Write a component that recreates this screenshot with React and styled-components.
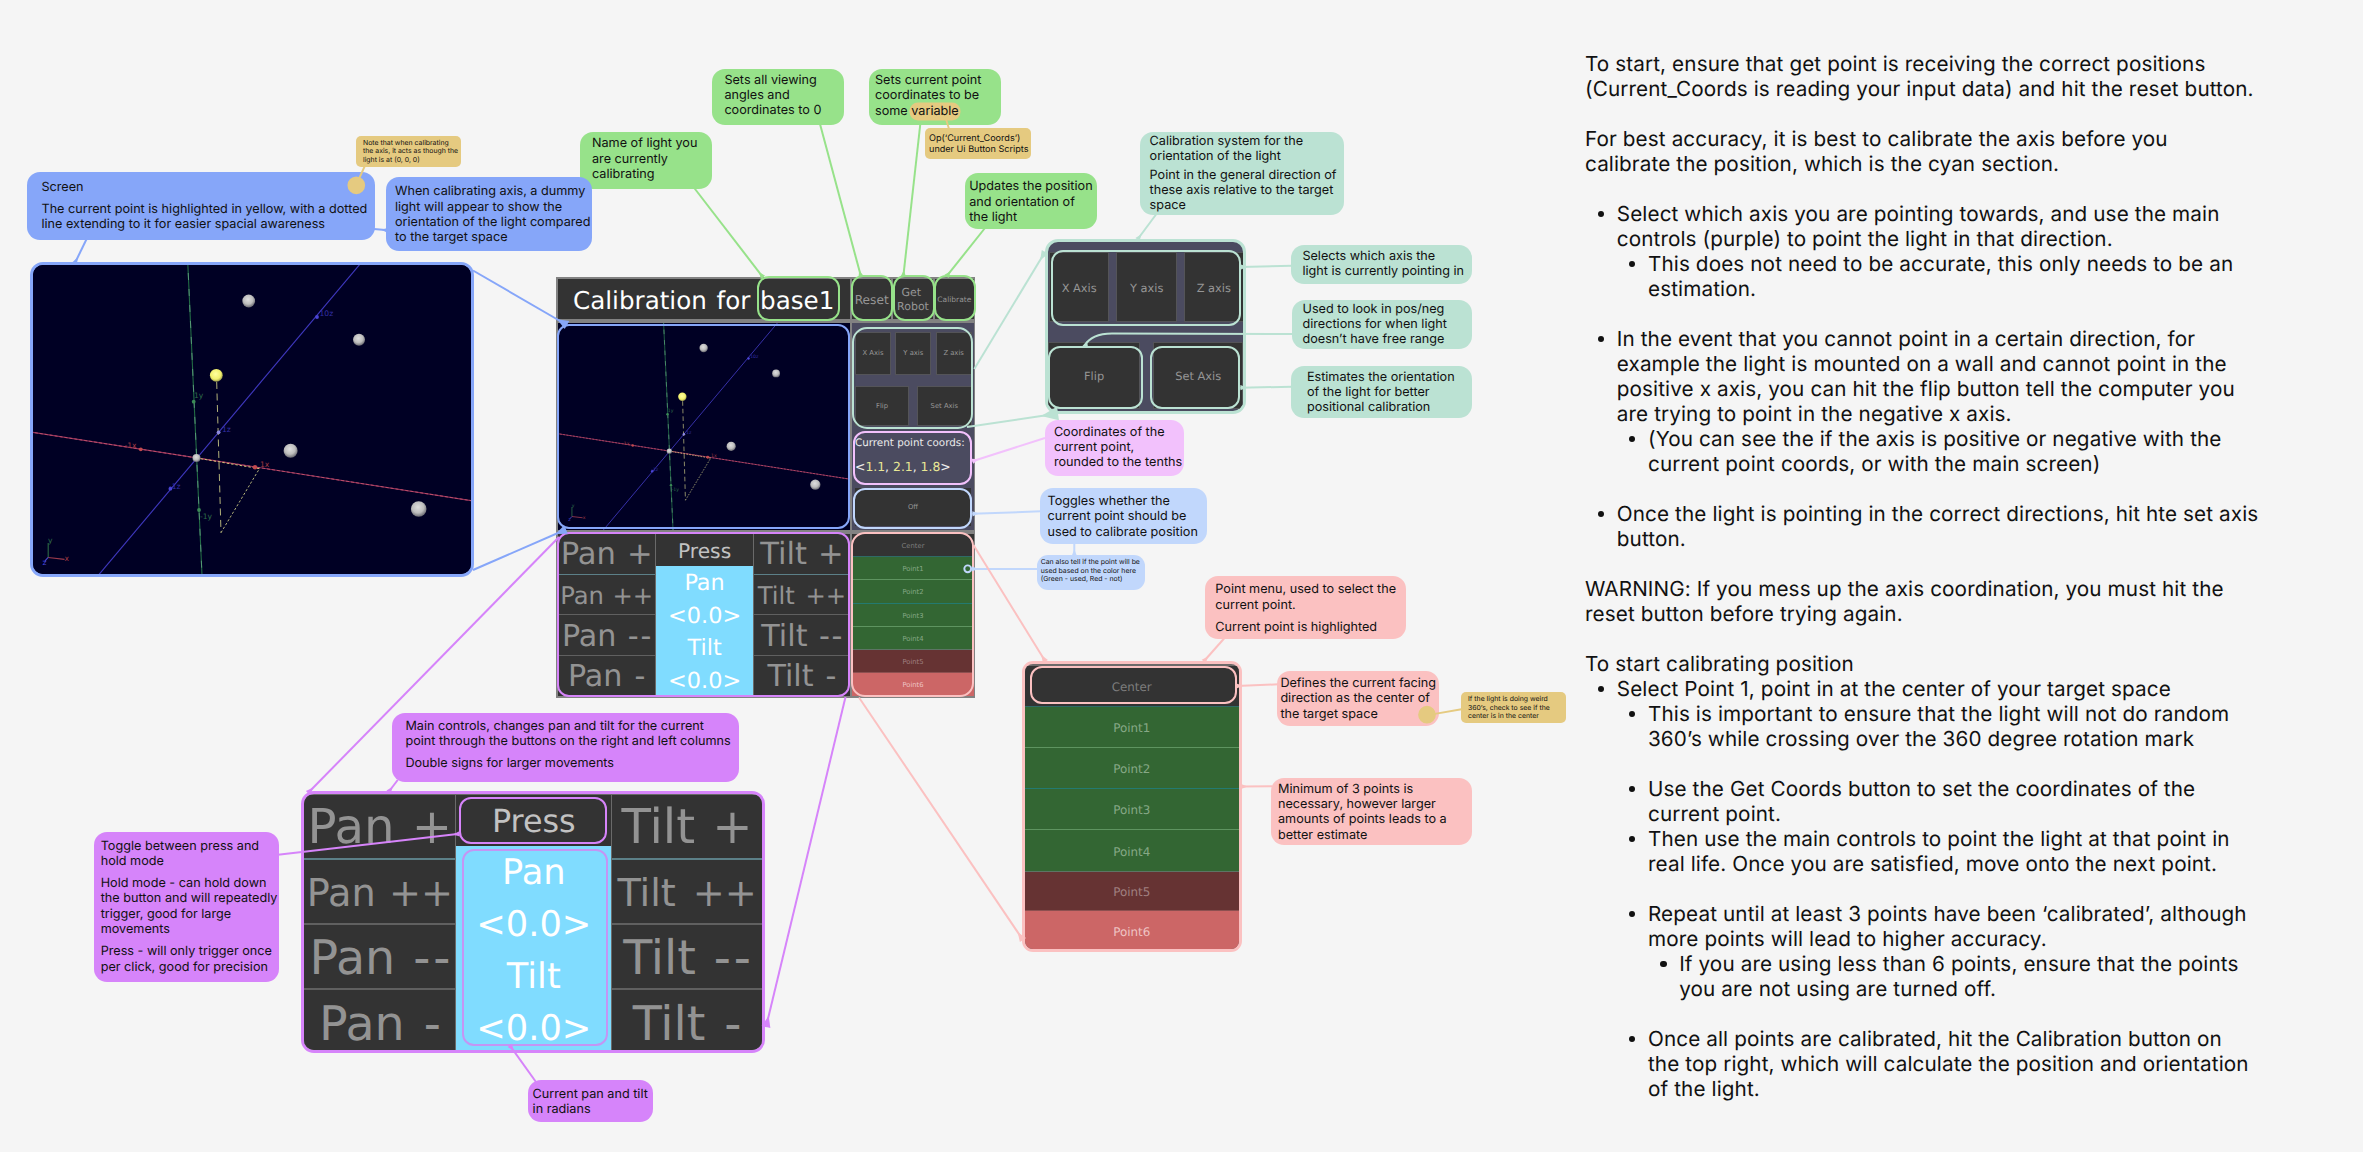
import React from "react";
import styled, { createGlobalStyle } from "styled-components";

const color = {
  page: "#f5f5f5",
  ink: "#111111",
  green: "#97e28a",
  blue: "#86a6f9",
  purple: "#d684fa",
  mint: "#bbe2d3",
  pink: "#fbc1c1",
  lilac: "#f2c1fc",
  sky: "#c1d7fc",
  sand: "#e5ca80",
  key: "#333333",
  slate: "#4b4b60",
  navy: "#000024",
  cyan: "#80dcff",
};

const GlobalStyle = createGlobalStyle`
  body { margin: 0; background: ${color.page}; }
  * { box-sizing: border-box; }
`;

const Page = styled.main`
  display: flex;
  width: 2363px;
  height: 1152px;
  overflow: hidden;
  background: ${color.page};
  color: ${color.ink};
  font-family: Inter, "Liberation Sans", sans-serif;
  text-rendering: geometricPrecision;
`;

/* The board is a free canvas: panels, notes and connectors are pinned on it. */
const Board = styled.section`
  position: relative;
  flex: 0 0 1585px;
`;

const Pinned = styled.div`
  position: absolute;
  left: ${(p) => p.$x}px;
  top: ${(p) => p.$y}px;
  width: ${(p) => p.$w}px;
  height: ${(p) => p.$h}px;
`;

const Frame = styled(Pinned)`
  display: flex;
  flex-direction: column;
  overflow: hidden;
  border: 3px solid ${(p) => p.$tone};
  border-radius: ${(p) => p.$radius || 13}px;
  background: ${(p) => p.$fill || color.key};
`;

const Ring = styled(Pinned)`
  border: 2px solid ${(p) => p.$tone};
  border-radius: ${(p) => p.$radius || 12}px;
`;

const NoteBox = styled(Pinned)`
  display: flex;
  flex-direction: column;
  gap: ${(p) => p.$gap || 0}px;
  padding: ${(p) => p.$padY}px 0 0 ${(p) => p.$padX}px;
  border-radius: ${(p) => p.$radius || 13}px;
  background: ${(p) => p.$tone};
  font-size: ${(p) => p.$size || 12.65}px;
  line-height: ${(p) => p.$lead || 15.33}px;
`;

const NoteText = styled.p`
  margin: 0;
  white-space: pre;
`;

const MarkedLine = styled.div`
  display: flex;
  gap: 3.6px;
`;

const Mark = styled.span`
  background: ${color.sand};
  border-radius: 7px;
  box-shadow: 0 0 0 1.5px ${color.sand};
`;

const Wires = styled.svg`
  position: absolute;
  inset: 0;
  width: 1586px;
  height: 1152px;
`;

/* ---------- Console widgets ---------- */

const uiFont = `"DejaVu Sans", Verdana, sans-serif`;

const Console = styled(Pinned)`
  display: grid;
  grid-template-columns: 292px 122px;
  grid-template-rows: 40px 207px 162px;
  column-gap: 2px;
  row-gap: 4px;
  padding: 2px 1px 1px 2px;
  background: #828282;
  font-family: ${uiFont};
`;

const TitleBar = styled.header`
  display: flex;
  align-items: center;
  padding: 2px 0 0 15px;
  background: ${color.key};
  color: #ffffff;
  font-size: 24.6px;
  word-spacing: 1.9px;
  white-space: nowrap;
`;

const TopKeys = styled.div`
  display: grid;
  grid-template-columns: repeat(3, 1fr);
  gap: 2px;
`;

const Key = styled.div`
  display: flex;
  align-items: center;
  justify-content: center;
  padding-top: ${(p) => p.$drop || 0}px;
  background: ${color.key};
  color: #969696;
  border: ${(p) => (p.$edge ? "1px solid #545458" : "0")};
  font-family: ${uiFont};
  font-size: ${(p) => p.$size}px;
  line-height: ${(p) => (p.$lead ? `${p.$lead}px` : "normal")};
  text-align: center;
  white-space: pre;
`;

const Side = styled.div`
  display: flex;
  flex-direction: column;
  padding: 9px 2px 2px 3px;
  background: ${color.slate};
`;

const KeyRow = styled.div`
  display: grid;
  grid-template-columns: ${(p) => p.$cols};
  column-gap: ${(p) => p.$gap}px;
  height: ${(p) => p.$h}px;
  margin: ${(p) => p.$margin || 0};
`;

const Readout = styled.div`
  display: flex;
  flex-direction: column;
  height: 61px;
  padding-top: 9px;
  color: #ececec;
  font-size: 10.35px;
  line-height: 14px;
  white-space: pre;
`;

const Coords = styled.div`
  margin-top: 10px;
  font-size: 12.4px;
`;

const Num = styled.span`
  color: #e9e795;
`;

const PadInset = styled.div`
  flex: 1;
  padding-top: 1px;
`;

const PadGrid = styled.div`
  display: grid;
  grid-template-columns: ${(p) => p.$cols};
  column-gap: 1px;
  height: ${(p) => p.$h}px;
  overflow: hidden;
  background: #6a6a6a;
  font-family: ${uiFont};
`;

const PadColumn = styled.div`
  display: flex;
  flex-direction: column;
`;

const PadKey = styled.div`
  display: flex;
  flex: 0 0 ${(p) => p.$h}px;
  align-items: center;
  justify-content: center;
  padding-top: ${(p) => p.$drop}px;
  border-bottom: ${(p) => p.$rule}px solid ${(p) => (p.$tint ? "#5c8088" : "#606060")};
  background: ${color.key};
  color: #939393;
  font-size: ${(p) => p.$size}px;
  word-spacing: ${(p) => p.$word || 0}em;
  white-space: nowrap;
`;

const Sign = styled.span`
  letter-spacing: ${(p) => p.$track}em;
  margin-right: -${(p) => p.$track}em;
`;

const ModeKey = styled.div`
  display: flex;
  flex: 0 0 ${(p) => p.$h}px;
  align-items: center;
  justify-content: center;
  padding-top: 1.5px;
  background: ${color.key};
  color: #c2c2c2;
  font-size: ${(p) => p.$size}px;
`;

const Angles = styled.div`
  flex: 1;
  padding-top: ${(p) => p.$top}px;
  background: ${color.cyan};
  color: #ffffff;
  text-align: center;
  font-size: ${(p) => p.$size}px;
  line-height: ${(p) => p.$lead}px;
`;

const PointsInset = styled.div`
  display: flex;
  flex: 1;
  padding-top: 2px;
`;

const PointList = styled.div`
  display: flex;
  flex-direction: column;
  flex: 1;
  font-family: ${uiFont};
  font-size: ${(p) => p.$size}px;
`;

const pointFill = {
  center: ["#333333", "#7d7d7d", "#2f6a66"],
  on: ["#336633", "#86a886", "#5e9460"],
  teal: ["#336633", "#86a886", "#237a70"],
  last: ["#336633", "#86a886", "#5d7464"],
  off: ["#663333", "#a08080", "#8d5050"],
  hot: ["#cc6666", "#efc4c4", "#cc6666"],
};

const PointRow = styled.div`
  display: flex;
  flex: 0 0 ${(p) => p.$h}px;
  align-items: center;
  justify-content: center;
  padding-top: ${(p) => p.$drop}px;
  border-bottom: ${(p) => p.$rule}px solid ${(p) => pointFill[p.$kind][2]};
  background: ${(p) => pointFill[p.$kind][0]};
  color: ${(p) => pointFill[p.$kind][1]};
`;

const ScreenSvg = styled.svg`
  display: block;
  width: 100%;
  height: 100%;
  background: ${color.navy};
`;

/* ---------- Instructions column ---------- */

const Guide = styled.article`
  flex: 1;
  padding-top: 51.3px;
  font-size: 20.7px;
  letter-spacing: 0.11px;
  line-height: 25px;
`;

const GuideText = styled.p`
  margin: 0 0 ${(p) => (p.$after ? 25 : 0)}px;
  white-space: pre;
`;

const GuideItem = styled.div`
  display: flex;
  align-items: flex-start;
  padding-left: ${(p) => p.$level * 31.2 - 18.4}px;
  margin-bottom: ${(p) => (p.$after ? 25 : 0)}px;
  white-space: pre;
`;

const Bullet = styled.span`
  flex: 0 0 6.4px;
  height: 6.4px;
  margin: 9.8px 12.6px 0 0;
  border-radius: 50%;
  background: ${color.ink};
`;

/* ---------- Data ---------- */

const notes = [
  { x: 580, y: 132, w: 132, h: 56.5, tone: color.green, padX: 12, padY: 4.4, text: ["Name of light you\nare currently\ncalibrating"] },
  { x: 712.4, y: 68.7, w: 131.6, h: 56.3, tone: color.green, padX: 12, padY: 4, text: ["Sets all viewing\nangles and\ncoordinates to 0"] },
  { x: 869, y: 69, w: 132, h: 56, tone: color.green, padX: 6, padY: 4, text: ["Sets current point\ncoordinates to be"], marked: ["some", "variable"] },
  { x: 964.6, y: 173, w: 132.4, h: 56, tone: color.green, padX: 4.6, padY: 6.4, text: ["Updates the position\nand orientation of\nthe light"] },
  { x: 925, y: 128, w: 106, h: 31, tone: color.sand, padX: 4, padY: 5.4, radius: 5, size: 9.1, lead: 11.1, text: ["Op(‘Current_Coords’)\nunder Ui Button Scripts"] },
  { x: 27.3, y: 171.7, w: 347.7, h: 68.3, tone: color.blue, padX: 14.2, padY: 8, gap: 7, text: ["Screen", "The current point is highlighted in yellow, with a dotted\nline extending to it for easier spacial awareness"] },
  { x: 386.3, y: 177.3, w: 205.7, h: 73.7, tone: color.blue, padX: 8.7, padY: 7, text: ["When calibrating axis, a dummy\nlight will appear to show the\norientation of the light compared\nto the target space"] },
  { x: 356, y: 135.5, w: 105, h: 31, tone: color.sand, padX: 7, padY: 3.4, radius: 5, size: 6.9, lead: 8.35, text: ["Note that when calibrating\nthe axis, it acts as though the\nlight is at (0, 0, 0)"] },
  { x: 1139.6, y: 132.3, w: 204.7, h: 82.7, tone: color.mint, padX: 10, padY: 1.3, gap: 3.4, text: ["Calibration system for the\norientation of the light", "Point in the general direction of\nthese axis relative to the target\nspace"] },
  { x: 1291.4, y: 244.7, w: 180.4, h: 39.3, tone: color.mint, padX: 11, padY: 4, text: ["Selects which axis the\nlight is currently pointing in"] },
  { x: 1292, y: 299.7, w: 180, h: 49.6, tone: color.mint, padX: 10.5, padY: 2, text: ["Used to look in pos/neg\ndirections for when light\ndoesn’t have free range"] },
  { x: 1291.4, y: 365.7, w: 180.4, h: 52.6, tone: color.mint, padX: 15.5, padY: 4, text: ["Estimates the orientation\nof the light for better\npositional calibration"] },
  { x: 1044.5, y: 419.7, w: 139.5, h: 56.3, tone: color.lilac, padX: 9.4, padY: 5, text: ["Coordinates of the\ncurrent point,\nrounded to the tenths"] },
  { x: 1040, y: 488, w: 167.3, h: 56.3, tone: color.sky, padX: 7.5, padY: 6, text: ["Toggles whether the\ncurrent point should be\nused to calibrate position"] },
  { x: 1037, y: 554.7, w: 108, h: 35, tone: color.sky, padX: 3.7, padY: 3.8, radius: 11, size: 6.9, lead: 8.35, text: ["Can also tell if the point will be\nused based on the color here\n(Green - used, Red - not)"] },
  { x: 1205.3, y: 576, w: 200.7, h: 62.7, tone: color.pink, padX: 10, padY: 6.3, gap: 6.8, text: ["Point menu, used to select the\ncurrent point.", "Current point is highlighted"] },
  { x: 1276.7, y: 670.7, w: 162.3, h: 55.6, tone: color.pink, padX: 3.7, padY: 5.4, text: ["Defines the current facing\ndirection as the center of\nthe target space"] },
  { x: 1460.8, y: 692, w: 105.2, h: 31, tone: color.sand, padX: 7.2, padY: 3.2, radius: 5, size: 6.9, lead: 8.35, text: ["If the light is doing weird\n360’s, check to see if the\ncenter is in the center"] },
  { x: 1271, y: 778, w: 201.3, h: 67, tone: color.pink, padX: 7, padY: 3.7, text: ["Minimum of 3 points is\nnecessary, however larger\namounts of points leads to a\nbetter estimate"] },
  { x: 391.8, y: 713.3, w: 347.5, h: 68.4, tone: color.purple, padX: 13.6, padY: 5.8, gap: 6.7, text: ["Main controls, changes pan and tilt for the current\npoint through the buttons on the right and left columns", "Double signs for larger movements"] },
  { x: 94.2, y: 832.3, w: 185, h: 149.4, tone: color.purple, padX: 6.5, padY: 6.4, gap: 6.8, text: ["Toggle between press and\nhold mode", "Hold mode - can hold down\nthe button and will repeatedly\ntrigger, good for large\nmovements", "Press - will only trigger once\nper click, good for precision"] },
  { x: 528, y: 1080, w: 125, h: 42, tone: color.purple, padX: 4.6, padY: 6.6, text: ["Current pan and tilt\nin radians"] },
];

const rings = [
  { x: 757, y: 275.6, w: 82.7, h: 45.8, tone: color.green },
  { x: 851.3, y: 275.4, w: 42, h: 46, tone: color.green },
  { x: 893.2, y: 275.4, w: 41.4, h: 46, tone: color.green },
  { x: 934, y: 275.4, w: 42, h: 46, tone: color.green },
  { x: 556.6, y: 324.4, w: 293.2, h: 204.6, tone: color.blue },
  { x: 852, y: 327, w: 121.4, h: 102, tone: color.mint, radius: 15 },
  { x: 853, y: 431, w: 119.4, h: 53.8, tone: color.lilac },
  { x: 853, y: 487.6, w: 119.4, h: 41, tone: color.sky },
  { x: 556.6, y: 532, w: 293.2, h: 165.4, tone: color.purple },
  { x: 851.3, y: 531.8, w: 122.6, h: 165.6, tone: color.pink, radius: 14 },
  { x: 1051, y: 250.4, w: 190, h: 75.4, tone: color.mint },
  { x: 1047.5, y: 346, w: 95.4, h: 63, tone: color.mint },
  { x: 1150, y: 346, w: 90.4, h: 63, tone: color.mint },
  { x: 1029.8, y: 666.2, w: 206.8, h: 38.2, tone: color.pink },
  { x: 459.3, y: 796.8, w: 147.4, h: 47, tone: color.purple },
  { x: 462, y: 848.7, w: 146.2, h: 197.2, tone: "#c495f4" },
];

/* Each wire runs from a note to the widget it explains; flare widens that end. */
const wires = [
  [693.5, 187, 763, 277.3, color.green],
  [820, 124, 861, 276.6, color.green],
  [920.3, 124, 903.3, 276.6, color.green],
  [985, 228, 946.5, 276.4, color.green],
  [86.6, 239, 74.7, 263.5, color.blue],
  [374, 229, 388, 230.3, color.blue],
  [473, 270.5, 567, 325, color.blue, 6],
  [473, 570, 566, 529.5, color.blue, 6],
  [1156.4, 214, 1137.5, 239.5, color.mint],
  [1292, 265.7, 1241, 267, color.mint],
  [1292, 386.7, 1240.4, 387.7, color.mint],
  [974.3, 369, 1045, 252, color.mint, 5],
  [967, 427, 1058, 413.5, color.mint, 9],
  [1045, 438, 972.4, 461.3, color.lilac],
  [1041, 511.3, 972.4, 513.8, color.sky],
  [1074.3, 543, 1074.3, 556, color.sky],
  [1038, 569, 971.6, 568.9, color.sky],
  [1224.5, 638, 1203.7, 661.5, color.pink],
  [1278, 684.3, 1236.4, 686, color.pink],
  [1272, 786.3, 1241, 786.5, color.pink],
  [973.5, 545, 1045.4, 661.5, color.pink, 4],
  [859, 697.5, 1023, 940, color.pink, 5],
  [397.7, 780, 388.6, 792, color.purple],
  [559, 537, 308, 793, color.purple, 4],
  [845.5, 697, 766, 1027, color.purple, 6],
  [278, 854.8, 459.6, 833.8, color.purple],
  [536, 1082, 509.8, 1045.4, color.purple],
];

const guide = [
  { t: "To start, ensure that get point is receiving the correct positions\n(Current_Coords is reading your input data) and hit the reset button.", after: 1 },
  { t: "For best accuracy, it is best to calibrate the axis before you\ncalibrate the position, which is the cyan section.", after: 1 },
  { l: 1, t: "Select which axis you are pointing towards, and use the main\ncontrols (purple) to point the light in that direction." },
  { l: 2, t: "This does not need to be accurate, this only needs to be an\nestimation.", after: 1 },
  { l: 1, t: "In the event that you cannot point in a certain direction, for\nexample the light is mounted on a wall and cannot point in the\npositive x axis, you can hit the flip button tell the computer you\nare trying to point in the negative x axis." },
  { l: 2, t: "(You can see the if the axis is positive or negative with the\ncurrent point coords, or with the main screen)", after: 1 },
  { l: 1, t: "Once the light is pointing in the correct directions, hit hte set axis\nbutton.", after: 1 },
  { t: "WARNING: If you mess up the axis coordination, you must hit the\nreset button before trying again.", after: 1 },
  { t: "To start calibrating position" },
  { l: 1, t: "Select Point 1, point in at the center of your target space" },
  { l: 2, t: "This is important to ensure that the light will not do random\n360’s while crossing over the 360 degree rotation mark", after: 1 },
  { l: 2, t: "Use the Get Coords button to set the coordinates of the\ncurrent point." },
  { l: 2, t: "Then use the main controls to point the light at that point in\nreal life. Once you are satisfied, move onto the next point.", after: 1 },
  { l: 2, t: "Repeat until at least 3 points have been ‘calibrated’, although\nmore points will lead to higher accuracy." },
  { l: 3, t: "If you are using less than 6 points, ensure that the points\nyou are not using are turned off.", after: 1 },
  { l: 2, t: "Once all points are calibrated, hit the Calibration button on\nthe top right, which will calculate the position and orientation\nof the light." },
];

const points = [
  ["Center", "center"],
  ["Point1", "on"],
  ["Point2", "teal"],
  ["Point3", "on"],
  ["Point4", "last"],
  ["Point5", "off"],
  ["Point6", "hot"],
];

const balls = [
  [248.7, 301, 6.4],
  [359, 339.7, 6],
  [290.6, 450.7, 7],
  [418.7, 509, 7.8],
  [196.5, 458, 4],
];

/* ---------- Components ---------- */

function Scene({ id, view, label, line }) {
  return (
    <ScreenSvg viewBox={view} preserveAspectRatio="none">
      <defs>
        <radialGradient id={`${id}-white`} cx="45%" cy="38%" r="62%">
          <stop offset="0" stopColor="#dedede" />
          <stop offset="0.6" stopColor="#bdbdbd" />
          <stop offset="1" stopColor="#6a6a72" />
        </radialGradient>
        <radialGradient id={`${id}-lit`} cx="45%" cy="40%" r="62%">
          <stop offset="0" stopColor="#ffffa0" />
          <stop offset="0.65" stopColor="#f1f06c" />
          <stop offset="1" stopColor="#8f8f4a" />
        </radialGradient>
      </defs>
      <g fill="none" strokeWidth={line}>
        <path d="M187.5 257 L202.4 584" stroke="#226b45" />
        <path d="M187.5 257 L202.4 584" stroke="#5f9f7d" strokeDasharray="7 9" strokeWidth={line * 0.8} />
        <path d="M366 257 L91 584" stroke="#3f38c0" />
        <path d="M20 430.4 L480 502" stroke="#8f2f58" />
        <path d="M20 430.4 L480 502" stroke="#c2546c" strokeDasharray="3 2" strokeWidth={line * 0.8} />
        <path d="M216.7 382 L221 532.7" stroke="#b4b37a" strokeDasharray="7 4.5" strokeWidth={line * 0.9} />
        <path d="M221 532.7 L259.4 468.7" stroke="#b4b37a" strokeDasharray="2.4 2" strokeWidth={line * 0.9} />
        <path d="M259.4 468.7 L196.5 458" stroke="#d0c878" strokeDasharray="2.4 2" strokeWidth={line * 0.9} />
        <path d="M48.2 557.5 V543" stroke="#2c6a45" />
        <path d="M48.2 557.5 L64.5 559.4" stroke="#9a3a4c" />
        <path d="M48.2 557.5 L45 561" stroke="#4a4ad0" />
      </g>
      <g>
        <circle cx="193.7" cy="401.7" r="1.9" fill="#3b8a56" />
        <circle cx="199" cy="510" r="1.9" fill="#3b8a56" />
        <circle cx="317" cy="317" r="1.9" fill="#4a44d4" />
        <circle cx="218.6" cy="432.3" r="1.9" fill="#8c88e0" />
        <circle cx="170.4" cy="488.7" r="1.9" fill="#4a44d4" />
        <circle cx="140.8" cy="449.3" r="1.9" fill="#c24a4e" />
        <circle cx="255" cy="467.3" r="2.2" fill="#c24a4e" />
      </g>
      <g fontFamily="DejaVu Sans, sans-serif" fontSize={label}>
        <g fill="#2e6c49">
          <text x="194" y="398.4">1y</text>
          <text x="200" y="519">-1y</text>
          <text x="48" y="543">y</text>
        </g>
        <g fill="#332fa6">
          <text x="319.5" y="316.4">10z</text>
          <text x="222" y="431.6">1z</text>
          <text x="169" y="488.6">-1z</text>
        </g>
        <g fill="#a03a42">
          <text x="124.5" y="448.2">-1x</text>
          <text x="260" y="466.6">1x</text>
          <text x="64.5" y="560.6">x</text>
        </g>
        <text x="42.5" y="565" fill="#4a4ae0">z</text>
      </g>
      {balls.map(([cx, cy, r]) => (
        <circle key={cx} cx={cx} cy={cy} r={r} fill={`url(#${id}-white)`} />
      ))}
      <circle cx="216.3" cy="375.3" r="6.4" fill={`url(#${id}-lit)`} />
    </ScreenSvg>
  );
}

const padSigns = [
  { sign: "+", size: 30.6, word: 0.04, drop: 1 },
  { sign: "++", size: 24.3, word: 0.03, tiltWord: 0.12, drop: 2.4 },
  { sign: "--", size: 30.2, word: 0.06, track: 0.06, drop: 2.4 },
  { sign: "-", size: 30.2, word: 0.08, drop: 1.6 },
];

function PadSide({ name, rows, rule, scale }) {
  return (
    <PadColumn>
      {padSigns.map((k, i) => (
        <PadKey
          key={k.sign}
          $h={rows[i]}
          $rule={i < 3 ? rule : 0}
          $tint={i === 0}
          $size={k.size * scale}
          $drop={k.drop * scale}
          $word={name === "Tilt" && k.tiltWord ? k.tiltWord : k.word}
        >
          <span>
            {name} <Sign $track={k.track || 0}>{k.sign}</Sign>
          </span>
        </PadKey>
      ))}
    </PadColumn>
  );
}

function Pad({ cols, height, rows, rule, scale, mode, angleTop, angleLead }) {
  return (
    <PadGrid $cols={cols} $h={height}>
      <PadSide name="Pan" rows={rows} rule={rule} scale={scale} />
      <PadColumn>
        <ModeKey $h={mode} $size={20.2 * scale}>Press</ModeKey>
        <Angles $top={angleTop} $lead={angleLead} $size={22.4 * scale}>
          <div>Pan</div>
          <div>&lt;0.0&gt;</div>
          <div>Tilt</div>
          <div>&lt;0.0&gt;</div>
        </Angles>
      </PadColumn>
      <PadSide name="Tilt" rows={rows} rule={rule} scale={scale} />
    </PadGrid>
  );
}

function Points({ size, heights, drop }) {
  return (
    <PointList $size={size}>
      {points.map(([name, kind], i) => (
        <PointRow key={name} $kind={kind} $h={heights[i]} $drop={drop} $rule={i < 6 ? 1 : 0}>
          {name}
        </PointRow>
      ))}
    </PointList>
  );
}

function Wire({ from, to, tone, flare = 3.5 }) {
  const dx = to[0] - from[0];
  const dy = to[1] - from[1];
  const len = Math.hypot(dx, dy);
  const ux = dx / len;
  const uy = dy / len;
  const back = Math.min(len, flare * 1.9);
  const wing = flare * 0.75;
  const bx = to[0] - ux * back;
  const by = to[1] - uy * back;
  const tip = `${bx},${by} ${to[0] - uy * wing},${to[1] + ux * wing} ${to[0] + uy * wing},${to[1] - ux * wing}`;
  return (
    <g>
      <line x1={from[0]} y1={from[1]} x2={to[0]} y2={to[1]} stroke={tone} strokeWidth="2" />
      <polygon points={tip} fill={tone} />
    </g>
  );
}

function Note({ note }) {
  return (
    <NoteBox
      $x={note.x}
      $y={note.y}
      $w={note.w}
      $h={note.h}
      $tone={note.tone}
      $padX={note.padX}
      $padY={note.padY}
      $gap={note.gap}
      $radius={note.radius}
      $size={note.size}
      $lead={note.lead}
    >
      {note.text.map((t) => (
        <NoteText key={t}>{t}</NoteText>
      ))}
      {note.marked && (
        <MarkedLine>
          <span>{note.marked[0]}</span>
          <Mark>{note.marked[1]}</Mark>
        </MarkedLine>
      )}
    </NoteBox>
  );
}

function MainConsole() {
  return (
    <Console $x={556} $y={277} $w={419} $h={421.3}>
      <TitleBar>Calibration for base1</TitleBar>
      <TopKeys>
        <Key $size={12.2} $drop={1.5}>Reset</Key>
        <Key $size={11} $lead={13.4} $drop={1}>{"Get \nRobot"}</Key>
        <Key $size={7.5} $drop={1}>Calibrate</Key>
      </TopKeys>
      <Scene id="mini" view="27 263 444.5 315" label={7} line={1.3} />
      <Side>
        <KeyRow $cols="36px 36px 36px" $gap={4.3} $h={42.5} $margin="0 0 11.8px">
          <Key $edge $size={6.8}>X Axis</Key>
          <Key $edge $size={6.8}>Y axis</Key>
          <Key $edge $size={6.8}>Z axis</Key>
        </KeyRow>
        <KeyRow $cols="54px 54.6px" $gap={8} $h={39.6} $margin="0 0 1px">
          <Key $edge $size={6.8}>Flip</Key>
          <Key $edge $size={6.8}>Set Axis</Key>
        </KeyRow>
        <Readout>
          <div>Current point coords:</div>
          <Coords>
            &lt;<Num>1.1</Num>, <Num>2.1</Num>, <Num>1.8</Num>&gt;
          </Coords>
        </Readout>
        <KeyRow $cols="116px" $gap={0} $h={38}>
          <Key $size={6.8} $drop={1}>Off</Key>
        </KeyRow>
      </Side>
      <Pad
        cols="97.3px 96.6px 1fr"
        height={162}
        rows={[40.6, 40.8, 40.8, 40]}
        rule={1}
        scale={1}
        mode={32.3}
        angleTop={1}
        angleLead={32.6}
      />
      <Points size={6.8} drop={1.6} heights={[23, 23.4, 23.4, 23.2, 23.4, 23, 22.6]} />
    </Console>
  );
}

export default function App() {
  return (
    <Page>
      <GlobalStyle />
      <Board>
        <Frame $x={30} $y={262} $w={444} $h={315.4} $tone={color.blue} $fill={color.navy}>
          <Scene id="large" view="33 265 438 309.4" label={7.6} line={1.1} />
        </Frame>

        <MainConsole />

        <Frame $x={1045} $y={238.7} $w={201.4} $h={175.5} $tone={color.mint} $fill={color.slate}>
          <KeyRow $cols="60.4px 61px 59.6px" $gap={6.8} $h={70} $margin="10.6px 0 19.4px 1px">
            <Key $edge $size={11.4} $drop={1}>X Axis</Key>
            <Key $edge $size={11.4} $drop={1}>Y axis</Key>
            <Key $edge $size={11.4} $drop={1}>Z axis</Key>
          </KeyRow>
          <KeyRow $cols="91.4px 90px" $gap={13.4} $h={67.6} $margin="0 0 0 0.4px">
            <Key $edge $size={11.4} $drop={2}>Flip</Key>
            <Key $edge $size={11.4} $drop={2}>Set Axis</Key>
          </KeyRow>
        </Frame>

        <Frame $x={1021.8} $y={661} $w={219.8} $h={291.4} $tone={color.pink} $fill="#6d6a6a" $radius={11}>
          <PointsInset>
            <Points size={11.9} drop={2.2} heights={[40.6, 41.2, 41.4, 41.2, 41.2, 39.8, 40]} />
          </PointsInset>
        </Frame>

        <Frame $x={301.3} $y={791} $w={463.8} $h={261.7} $tone={color.purple} $fill="#6a6a6a">
          <PadInset>
            <Pad
              cols="151.2px 154.6px 1fr"
              height={256}
              rows={[64.6, 65.2, 65.2, 66]}
              rule={2}
              scale={1.575}
              mode={51.4}
              angleTop={1}
              angleLead={52}
            />
          </PadInset>
        </Frame>

        {rings.map((r) => (
          <Ring
            key={`${r.x}-${r.y}`}
            $x={r.x}
            $y={r.y}
            $w={r.w}
            $h={r.h}
            $tone={r.tone}
            $radius={r.radius}
          />
        ))}

        <Wires viewBox="0 0 1586 1152">
          {wires.map(([x1, y1, x2, y2, tone, flare]) => (
            <Wire key={`${x1}-${y1}`} from={[x1, y1]} to={[x2, y2]} tone={tone} flare={flare} />
          ))}
          <path
            d="M1293 334 L1112 333.6 C1098 333.6 1089 338 1084.5 346"
            fill="none"
            stroke={color.mint}
            strokeWidth="2"
          />
          <polygon points="1081.5,347 1088,347 1087,341" fill={color.mint} />
          <circle cx="967.7" cy="568.8" r="3.4" fill="#336633" stroke={color.sky} strokeWidth="1.9" />
        </Wires>

        {notes.map((n) => (
          <Note key={`${n.x}-${n.y}`} note={n} />
        ))}

        <Wires viewBox="0 0 1586 1152">
          <g stroke={color.sand} strokeWidth="1.9" fill={color.sand}>
            <line x1="364.8" y1="166" x2="358" y2="181" />
            <circle cx="356.3" cy="185.3" r="7.9" />
            <line x1="1461.5" y1="709.3" x2="1432" y2="714.4" />
            <circle cx="1427" cy="714.7" r="7.9" />
            <line x1="949.3" y1="130" x2="946" y2="119" />
          </g>
        </Wires>
      </Board>

      <Guide>
        {guide.map((g) =>
          g.l ? (
            <GuideItem key={g.t} $level={g.l} $after={g.after}>
              <Bullet />
              <span>{g.t}</span>
            </GuideItem>
          ) : (
            <GuideText key={g.t} $after={g.after}>{g.t}</GuideText>
          )
        )}
      </Guide>
    </Page>
  );
}
